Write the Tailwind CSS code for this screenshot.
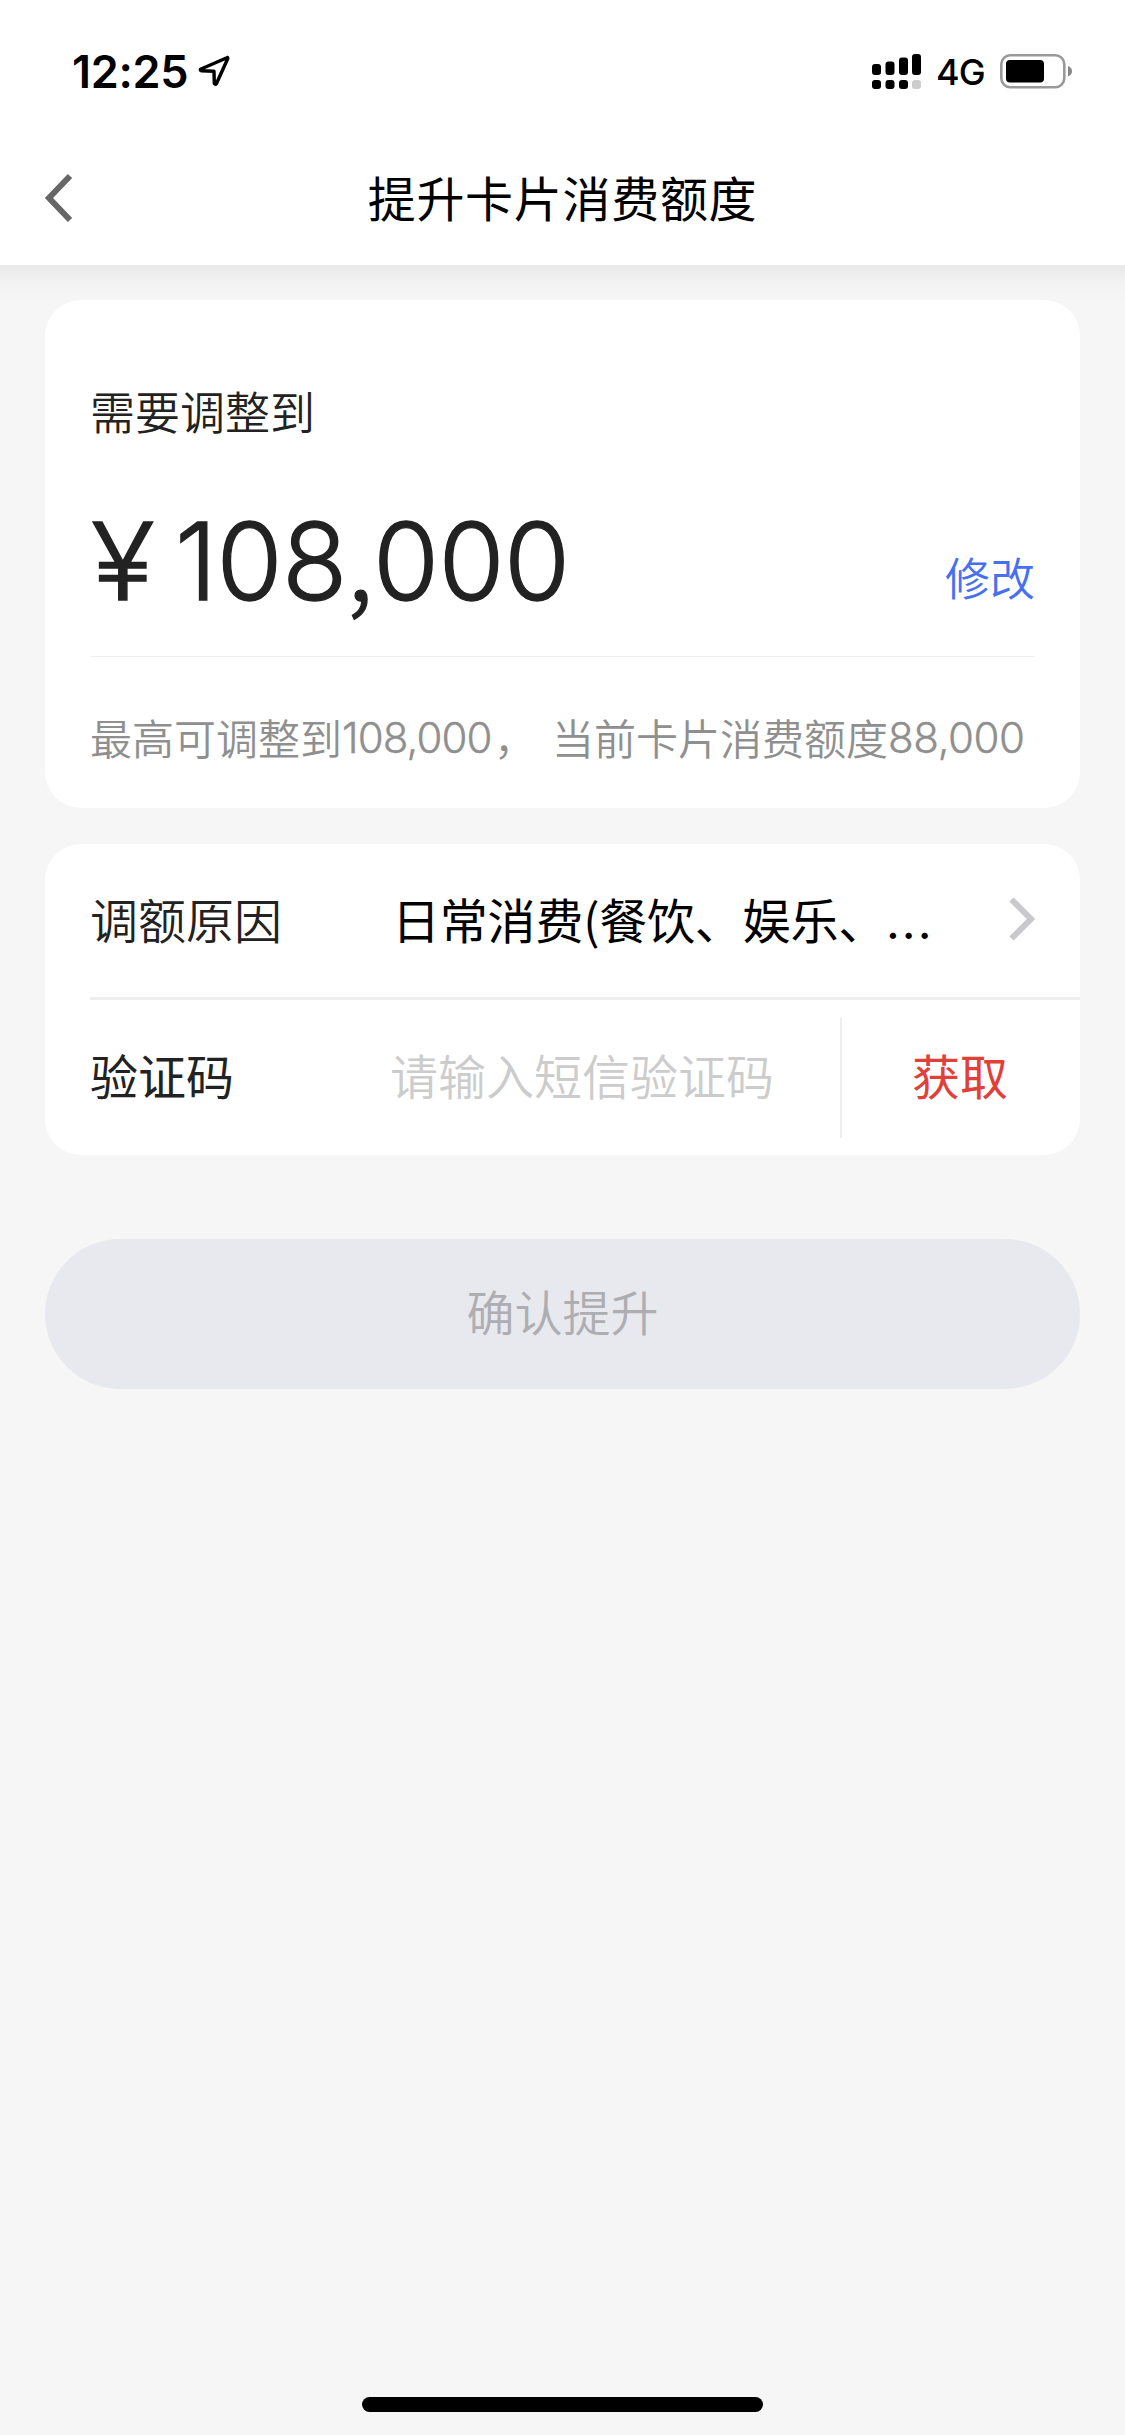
<!DOCTYPE html>
<html lang="zh-CN">
<head>
<meta charset="utf-8">
<title>提升卡片消费额度</title>
<script src="https://cdn.jsdelivr.net/npm/@tailwindcss/browser@4"></script>
</head>
<body class="bg-[#f6f6f6] font-['Noto_Sans_CJK_SC',sans-serif]">
<div class="flex h-[2435px] w-[1125px] flex-col overflow-hidden">
  <header class="h-[265px] shrink-0 bg-white">
    <div class="flex h-[132px] items-center justify-between pt-[11px] pl-[72px] pr-[52px] font-['Inter',sans-serif] text-black">
      <div class="flex items-center gap-[10px]">
        <span class="w-[116px] whitespace-nowrap text-[45px] leading-[60px] font-semibold tracking-[-0.3px]">12:25</span>
        <svg class="-mt-[1px] h-[32px] w-[32px]" viewBox="0 0 32 32" fill="none" stroke="#000" stroke-width="3.400" stroke-linejoin="round"><path d="M29.500 2.500 L2.500 14.300 Q2 15.500 3.500 15.800 L16 16.200 L16.300 28.500 Q17.500 30 18.500 28.500 L29.800 3.500 Z"/></svg>
      </div>
      <div class="flex items-center">
        <svg class="h-[36px] w-[50px]" viewBox="0 0 50 36"><g fill="#000"><rect x="0" y="10" width="9" height="11" rx="3"/><rect x="13.500" y="7.500" width="9" height="13.500" rx="3"/><rect x="27" y="3.500" width="9" height="17.500" rx="3"/><rect x="40" y="0" width="9" height="21" rx="3"/><rect x="0" y="26" width="9" height="9" rx="3"/><rect x="13.500" y="26" width="9" height="9" rx="3"/><rect x="27" y="26" width="9" height="9" rx="3"/></g><rect x="40" y="26" width="9" height="9" rx="3" fill="#ccc"/></svg>
        <span class="ml-[14px] w-[64px] whitespace-nowrap pt-[1px] text-[36px] leading-[40px] font-medium tracking-[-0.8px]">4G</span>
        <svg class="h-[36px] w-[73px]" viewBox="0 0 73 36"><rect x="1.300" y="1.300" width="63" height="32" rx="9" fill="none" stroke="#999" stroke-width="2.600"/><rect x="6" y="6" width="38" height="22.500" rx="4" fill="#000"/><path d="M68 12 Q72 13.500 72 17.300 Q72 21 68 22.500 Z" fill="#888"/></svg>
      </div>
    </div>
    <div class="grid h-[133px] grid-cols-[120px_1fr_120px] items-center">
      <svg class="mb-[2px] ml-[44px] h-[52px] w-[32px]" viewBox="0 0 32 52" fill="none" stroke="#666" stroke-width="6"><path d="M26 4 L5 26 L26 48"/></svg>
      <h1 class="pb-[6px] text-center text-[48px] leading-[72px] tracking-[0.7px] text-black">提升卡片消费额度</h1>
    </div>
  </header>
  <div class="h-[35px] shrink-0 bg-linear-to-b from-[#e9e9e9] via-[#f2f2f2] to-[#f6f6f6]"></div>

  <main class="flex grow flex-col px-[45px]">
    <section class="h-[508px] rounded-[36px] bg-white px-[45px] pt-[77px]">
      <p class="text-[45px] leading-[68px] font-[350] text-[#222]">需要调整到</p>
      <div class="flex h-[212px] justify-between border-b border-[#efefef]">
        <div class="flex pt-[51px] font-['Inter',sans-serif] text-[107px] leading-[130px] font-light text-[#222] [-webkit-text-stroke:1.3px_#222]"><span class="w-[85px] origin-left translate-x-[1px] scale-x-110">¥</span><span class="tracking-[-0.6px] whitespace-nowrap">108<span class="font-['Noto_Sans_CJK_SC',sans-serif] leading-none">,</span>000</span></div>
        <a class="pt-[98px] text-[45px] leading-[68px] font-[350] text-[#4670f0]">修改</a>
      </div>
      <p class="flex pt-[48px] text-[42px] leading-[64px] font-[350] whitespace-nowrap text-[#8f8f8f]"><span>最高可调整到</span><span class="w-[152px] pt-[1px] font-['Inter',sans-serif] tracking-[-0.9px] [-webkit-text-stroke:0.4px_#8f8f8f]">108,000</span><span class="w-[58px]">，</span><span>当前卡片消费额度</span><span class="pt-[1px] font-['Inter',sans-serif] tracking-[-0.4px] [-webkit-text-stroke:0.4px_#8f8f8f]">88,000</span></p>
    </section>

    <section class="mt-[36px] h-[311px] overflow-hidden rounded-[36px] bg-white pl-[45px] text-[48px] leading-[72px]">
      <div class="flex h-[156px] items-center border-b-[3px] border-[#eee] pb-[3px]">
        <span class="w-[302px] pb-[3px] font-[350] text-[#222]">调额原因</span>
        <span class="w-[617px] whitespace-nowrap pt-[1px] text-black tracking-[-0.2px]">日常消费(餐饮、娱乐、<span class="font-['Inter',sans-serif] tracking-[2px]">...</span></span>
        <svg class="h-[44px] w-[28px]" viewBox="0 0 28 44" fill="none" stroke="#c8c8cd" stroke-width="6"><path d="M2.500 2.500 L22 22 L2.500 41.500"/></svg>
      </div>
      <div class="flex h-[155px] items-center">
        <span class="w-[300px] pb-[7px] text-[#222]">验证码</span>
        <span class="w-[450px] pb-[7px] font-[350] text-[#ccc]">请输入短信验证码</span>
        <div class="flex h-[120px] flex-1 items-center justify-center border-l-2 border-[#eee] pr-[2px] pb-[7px] text-[#e04038]">获取</div>
      </div>
    </section>

    <button class="mt-[84px] h-[150px] rounded-full bg-[#e8e9ee] pb-[8px] text-[48px] leading-[72px] font-[350] text-[#aeaeb2]">确认提升</button>
    <div class="mx-auto mt-auto mb-[23px] h-[15px] w-[401px] rounded-full bg-black"></div>
  </main>
</div>
</body>
</html>
